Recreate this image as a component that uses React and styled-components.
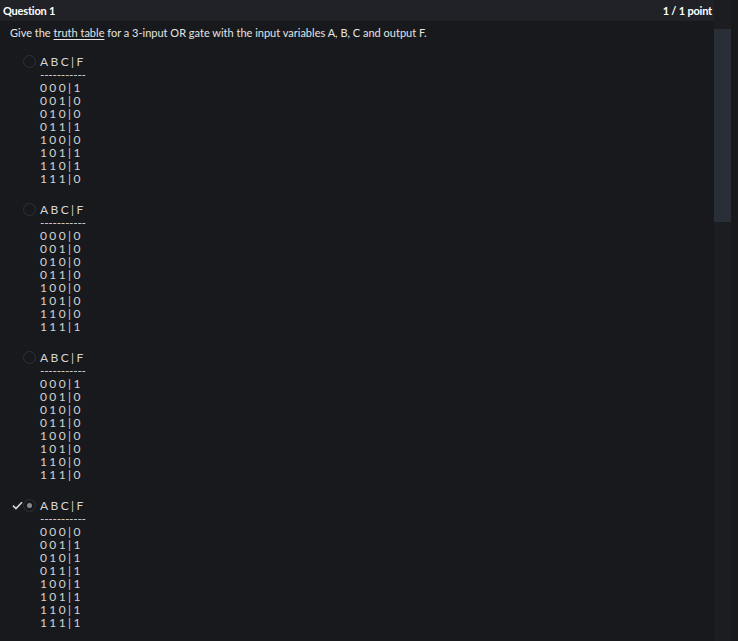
import styled, { createGlobalStyle } from 'styled-components';

const GlobalStyle = createGlobalStyle`
  html, body {
    margin: 0;
    padding: 0;
    background: #18191c;
  }
  body {
    font-family: Lato, "Open Sans", sans-serif;
  }
`;

const options = [
  { rows: ['1', '0', '0', '1', '0', '1', '1', '0'] },
  { rows: ['0', '0', '0', '0', '0', '0', '0', '1'] },
  { rows: ['1', '0', '0', '0', '0', '0', '0', '0'] },
  { rows: ['0', '1', '1', '1', '1', '1', '1', '1'], selected: true },
];

const inputs = ['000', '001', '010', '011', '100', '101', '110', '111'];

export default function App() {
  return (
    <>
      <GlobalStyle />
      <Page>
        <Main>
          <Header>
            <span>Question 1</span>
            <span>1 / 1 point</span>
          </Header>
          <Body>
            <Prompt>
              Give the <u>truth table</u> for a 3-input OR gate with the input variables A, B, C and output F.
            </Prompt>
            <Options>
              {options.map((opt, i) => (
                <Option key={i}>
                  <Mark>{opt.selected && <Check viewBox="0 0 12 10"><path d="M1 5.2 L4.3 8.4 L11 1.4" /></Check>}</Mark>
                  <Radio $checked={opt.selected} />
                  <Table>
                    <Line>ABC|F</Line>
                    <Dashes>-----------</Dashes>
                    {inputs.map((inp, j) => (
                      <Line key={j}>{inp + '|' + opt.rows[j]}</Line>
                    ))}
                  </Table>
                </Option>
              ))}
            </Options>
          </Body>
        </Main>
        <Track>
          <Thumb />
        </Track>
        <Edge />
      </Page>
    </>
  );
}

const Page = styled.div`
  display: flex;
  width: 738px;
  height: 641px;
  overflow: hidden;
  background: #18191c;
`;

const Main = styled.div`
  flex: 1;
  display: flex;
  flex-direction: column;
  min-width: 0;
`;

const Header = styled.div`
  height: 21px;
  background: #202227;
  display: flex;
  align-items: center;
  justify-content: space-between;
  padding: 0 2px 0 3px;
  font-size: 11px;
  font-weight: 700;
  color: #ffffff;
  letter-spacing: -0.2px;
`;

const Body = styled.div`
  padding: 5px 10px 0 10px;
`;

const Prompt = styled.p`
  margin: 0;
  font-size: 11px;
  line-height: 14px;
  color: #e4e4e4;

  u {
    text-decoration-thickness: 1px;
    text-underline-offset: 2px;
  }
`;

const Options = styled.div`
  display: flex;
  flex-direction: column;
  gap: 18px;
  padding-top: 15px;
`;

const Option = styled.div`
  display: flex;
  align-items: flex-start;
`;

const Mark = styled.div`
  width: 13px;
  height: 13px;
  display: flex;
  align-items: center;
  justify-content: flex-start;
  padding-left: 2px;
  box-sizing: border-box;
`;

const Check = styled.svg`
  width: 11px;
  height: 9px;
  fill: none;
  stroke: #d6d6d6;
  stroke-width: 1.8;
`;

const Radio = styled.div`
  position: relative;
  width: 13px;
  height: 13px;
  box-sizing: border-box;
  border-radius: 50%;
  border: 1px solid #2d313b;
  margin-right: 4px;

  &::after {
    content: '';
    display: ${(p) => (p.$checked ? 'block' : 'none')};
    position: absolute;
    left: 3px;
    top: 3px;
    width: 5px;
    height: 5px;
    border-radius: 50%;
    background: #8a8b8f;
  }
`;

const Table = styled.div`
  display: flex;
  flex-direction: column;
  font-size: 12px;
  line-height: 13px;
  color: #d4d4d4;
  letter-spacing: 2.4px;
  white-space: pre;
`;

const Line = styled.div``;

const Dashes = styled.div`
  letter-spacing: -0.3px;
`;

const Track = styled.div`
  width: 17px;
  background: #1c1d21;
  padding-top: 29px;
  box-sizing: border-box;
`;

const Thumb = styled.div`
  height: 193px;
  background: #2a2e36;
`;

const Edge = styled.div`
  width: 7px;
  background: #19191c;
`;
